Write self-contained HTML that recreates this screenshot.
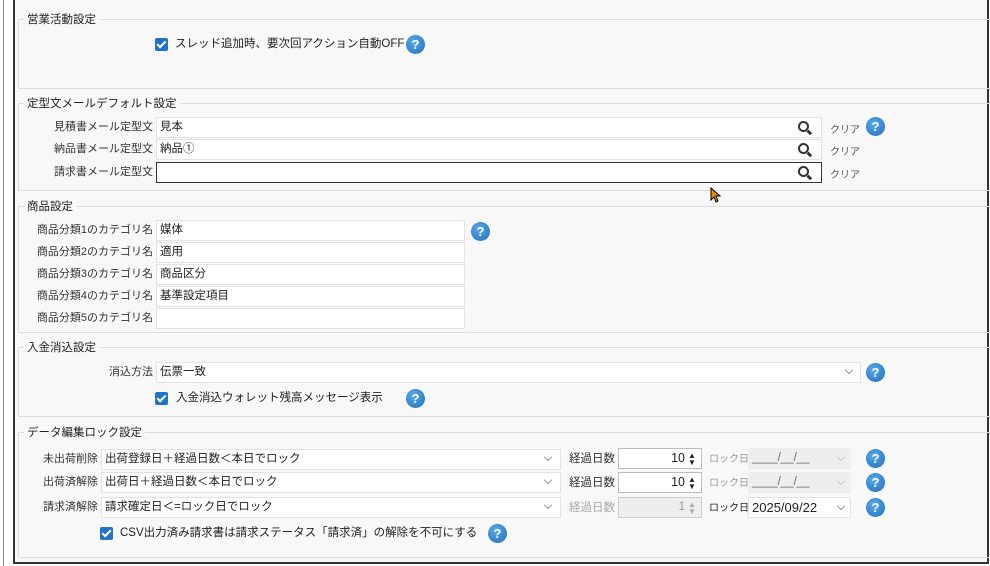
<!DOCTYPE html>
<html><head><meta charset="utf-8"><style>
*{box-sizing:border-box;margin:0;padding:0}
body{width:990px;height:566px;background:#fff;position:relative;overflow:hidden;font-family:"Liberation Sans","Noto Sans CJK JP",sans-serif;font-size:11px;color:#222}
.a{position:absolute}
#outer{left:13px;top:-2px;width:976px;height:566px;background:#f8f8f8;border:1px solid #333;border-width:0 2px 2px 2px}
.sec{position:absolute;left:18px;width:975px;border:1px solid #ddd;border-right:none}
.st{position:absolute;background:#f8f8f8;padding:0 3px;font-size:11.5px;color:#222;white-space:nowrap}
.in{position:absolute;background:#fff;border:1px solid #e2e2e2;height:21px;padding:2px 3px;line-height:15px;white-space:nowrap;font-size:11.5px}
.lb{position:absolute;text-align:right;white-space:nowrap;line-height:16px;color:#333;font-size:11px}
.hp{position:absolute;width:19px;height:19px;border-radius:50%;background:radial-gradient(circle at 40% 35%,#5aa8e6,#1d6fbf);color:#fff;font-weight:bold;font-size:13px;line-height:19px;text-align:center}
.cb{position:absolute;width:13px;height:13px;background:#1f73c8;border-radius:2px}
.cb:after{content:"";position:absolute;left:4px;top:1px;width:3px;height:7px;border:solid #fff;border-width:0 2px 2px 0;transform:rotate(45deg)}
.cl{position:absolute;font-size:10px;color:#555}
.chev{position:absolute;width:6px;height:6px;border:solid #999;border-width:0 1px 1px 0;transform:rotate(45deg)}
.mag{position:absolute;width:11px;height:11px;border:2.5px solid #333;border-radius:50%}
.mag:after{content:"";position:absolute;left:7px;top:8px;width:5px;height:2.5px;background:#333;transform:rotate(45deg)}
</style></head><body>
<div class="a" style="left:3px;top:0;width:1px;height:566px;background:#888"></div>
<div id="outer" class="a"></div>

<div class="sec" style="top:19px;height:70px"></div><div class="st" style="left:24px;top:11px">営業活動設定</div>
<div class="sec" style="top:103px;height:88px"></div><div class="st" style="left:24px;top:95px">定型文メールデフォルト設定</div>
<div class="sec" style="top:206px;height:127px"></div><div class="st" style="left:24px;top:198px">商品設定</div>
<div class="sec" style="top:347px;height:70px"></div><div class="st" style="left:24px;top:339px">入金消込設定</div>
<div class="sec" style="top:432px;height:126px"></div><div class="st" style="left:24px;top:424px">データ編集ロック設定</div>

<div class="cb" style="left:155px;top:38px"></div>
<div class="lb" style="left:175px;top:36px;font-size:11.5px;color:#222">スレッド追加時、要次回アクション自動OFF</div>
<div class="hp" style="left:406px;top:35px">?</div>

<div class="lb" style="left:20px;width:133px;top:119px">見積書メール定型文</div>
<div class="in" style="left:156px;top:117px;width:666px">見本</div>
<div class="mag" style="left:798px;top:121px"></div>
<div class="cl" style="left:830px;top:121px">クリア</div>
<div class="hp" style="left:866px;top:117px">?</div>
<div class="lb" style="left:20px;width:133px;top:141px">納品書メール定型文</div>
<div class="in" style="left:156px;top:139px;width:666px">納品①</div>
<div class="mag" style="left:798px;top:143px"></div>
<div class="cl" style="left:830px;top:143px">クリア</div>
<div class="lb" style="left:20px;width:133px;top:164px">請求書メール定型文</div>
<div class="in" style="left:156px;top:162px;width:666px;border-color:#333"></div>
<div class="mag" style="left:798px;top:166px"></div>
<div class="cl" style="left:830px;top:166px">クリア</div>

<div class="lb" style="left:20px;width:133px;top:222px">商品分類1のカテゴリ名</div><div class="in" style="left:156px;top:220px;width:309px">媒体</div>
<div class="lb" style="left:20px;width:133px;top:244px">商品分類2のカテゴリ名</div><div class="in" style="left:156px;top:242px;width:309px">適用</div>
<div class="lb" style="left:20px;width:133px;top:266px">商品分類3のカテゴリ名</div><div class="in" style="left:156px;top:264px;width:309px">商品区分</div>
<div class="lb" style="left:20px;width:133px;top:288px">商品分類4のカテゴリ名</div><div class="in" style="left:156px;top:286px;width:309px">基準設定項目</div>
<div class="lb" style="left:20px;width:133px;top:310px">商品分類5のカテゴリ名</div><div class="in" style="left:156px;top:308px;width:309px"></div>
<div class="hp" style="left:471px;top:222px">?</div>

<div class="lb" style="left:20px;width:133px;top:364px">消込方法</div>
<div class="in" style="left:156px;top:362px;width:705px">伝票一致</div>
<div class="chev" style="left:846px;top:367px"></div>
<div class="hp" style="left:866px;top:363px">?</div>
<div class="cb" style="left:155px;top:392px"></div>
<div class="lb" style="left:176px;top:390px;font-size:11.5px;color:#222">入金消込ウォレット残高メッセージ表示</div>
<div class="hp" style="left:406px;top:389px">?</div>

<div class="lb" style="left:20px;width:78px;top:451px">未出荷削除</div>
<div class="in" style="left:101px;top:449px;width:460px">出荷登録日＋経過日数＜本日でロック</div><div class="chev" style="left:545px;top:454px"></div>
<div class="lb" style="left:20px;width:78px;top:474px">出荷済解除</div>
<div class="in" style="left:101px;top:472px;width:460px">出荷日＋経過日数＜本日でロック</div><div class="chev" style="left:545px;top:477px"></div>
<div class="lb" style="left:20px;width:78px;top:499px">請求済解除</div>
<div class="in" style="left:101px;top:497px;width:460px">請求確定日＜=ロック日でロック</div><div class="chev" style="left:545px;top:502px"></div>

<div class="lb" style="left:569px;top:451px;font-size:11.5px">経過日数</div>
<div class="in" style="left:618px;top:448px;width:84px;text-align:right;padding-right:16px;border-color:#bbb;font-size:12.5px">10</div>
<div class="lb" style="left:569px;top:475px;font-size:11.5px">経過日数</div>
<div class="in" style="left:618px;top:472px;width:84px;text-align:right;padding-right:16px;border-color:#bbb;font-size:12.5px">10</div>
<div class="lb" style="left:569px;top:500px;color:#aaa;font-size:11.5px">経過日数</div>
<div class="in" style="left:618px;top:497px;width:84px;text-align:right;padding-right:16px;background:#eee;border-color:#ccc;color:#999">1</div>
<div class="a" style="left:688px;top:452px;font-size:8px;line-height:7px">▲<br>▼</div>
<div class="a" style="left:688px;top:476px;font-size:8px;line-height:7px">▲<br>▼</div>
<div class="a" style="left:688px;top:501px;font-size:8px;line-height:7px;color:#aaa">▲<br>▼</div>

<div class="lb" style="left:709px;top:452px;font-size:10px;color:#999">ロック日</div>
<div class="in" style="left:748px;top:448px;width:103px;background:#eee;border-color:#eee;color:#666">____/__/__</div><div class="chev" style="left:838px;top:454px;border-color:#ccc"></div>
<div class="lb" style="left:709px;top:476px;font-size:10px;color:#999">ロック日</div>
<div class="in" style="left:748px;top:472px;width:103px;background:#eee;border-color:#eee;color:#666">____/__/__</div><div class="chev" style="left:838px;top:478px;border-color:#ccc"></div>
<div class="lb" style="left:709px;top:501px;font-size:10px;color:#222">ロック日</div>
<div class="in" style="left:748px;top:497px;width:103px;font-size:13px">2025/09/22</div><div class="chev" style="left:838px;top:503px"></div>

<div class="hp" style="left:866px;top:449px">?</div>
<div class="hp" style="left:866px;top:473px">?</div>
<div class="hp" style="left:866px;top:498px">?</div>

<div class="cb" style="left:100px;top:527px"></div>
<div class="lb" style="left:120px;top:525px;font-size:11.5px;color:#222">CSV出力済み請求書は請求ステータス「請求済」の解除を不可にする</div>
<div class="hp" style="left:488px;top:524px">?</div>

<svg class="a" style="left:710px;top:187px" width="12" height="16" viewBox="0 0 12 16"><path d="M1 1 L1 13 L4 10 L6 15 L8 14 L6 9 L10 9 Z" fill="#e08a00" stroke="#000" stroke-width="1"/></svg>
</body></html>
